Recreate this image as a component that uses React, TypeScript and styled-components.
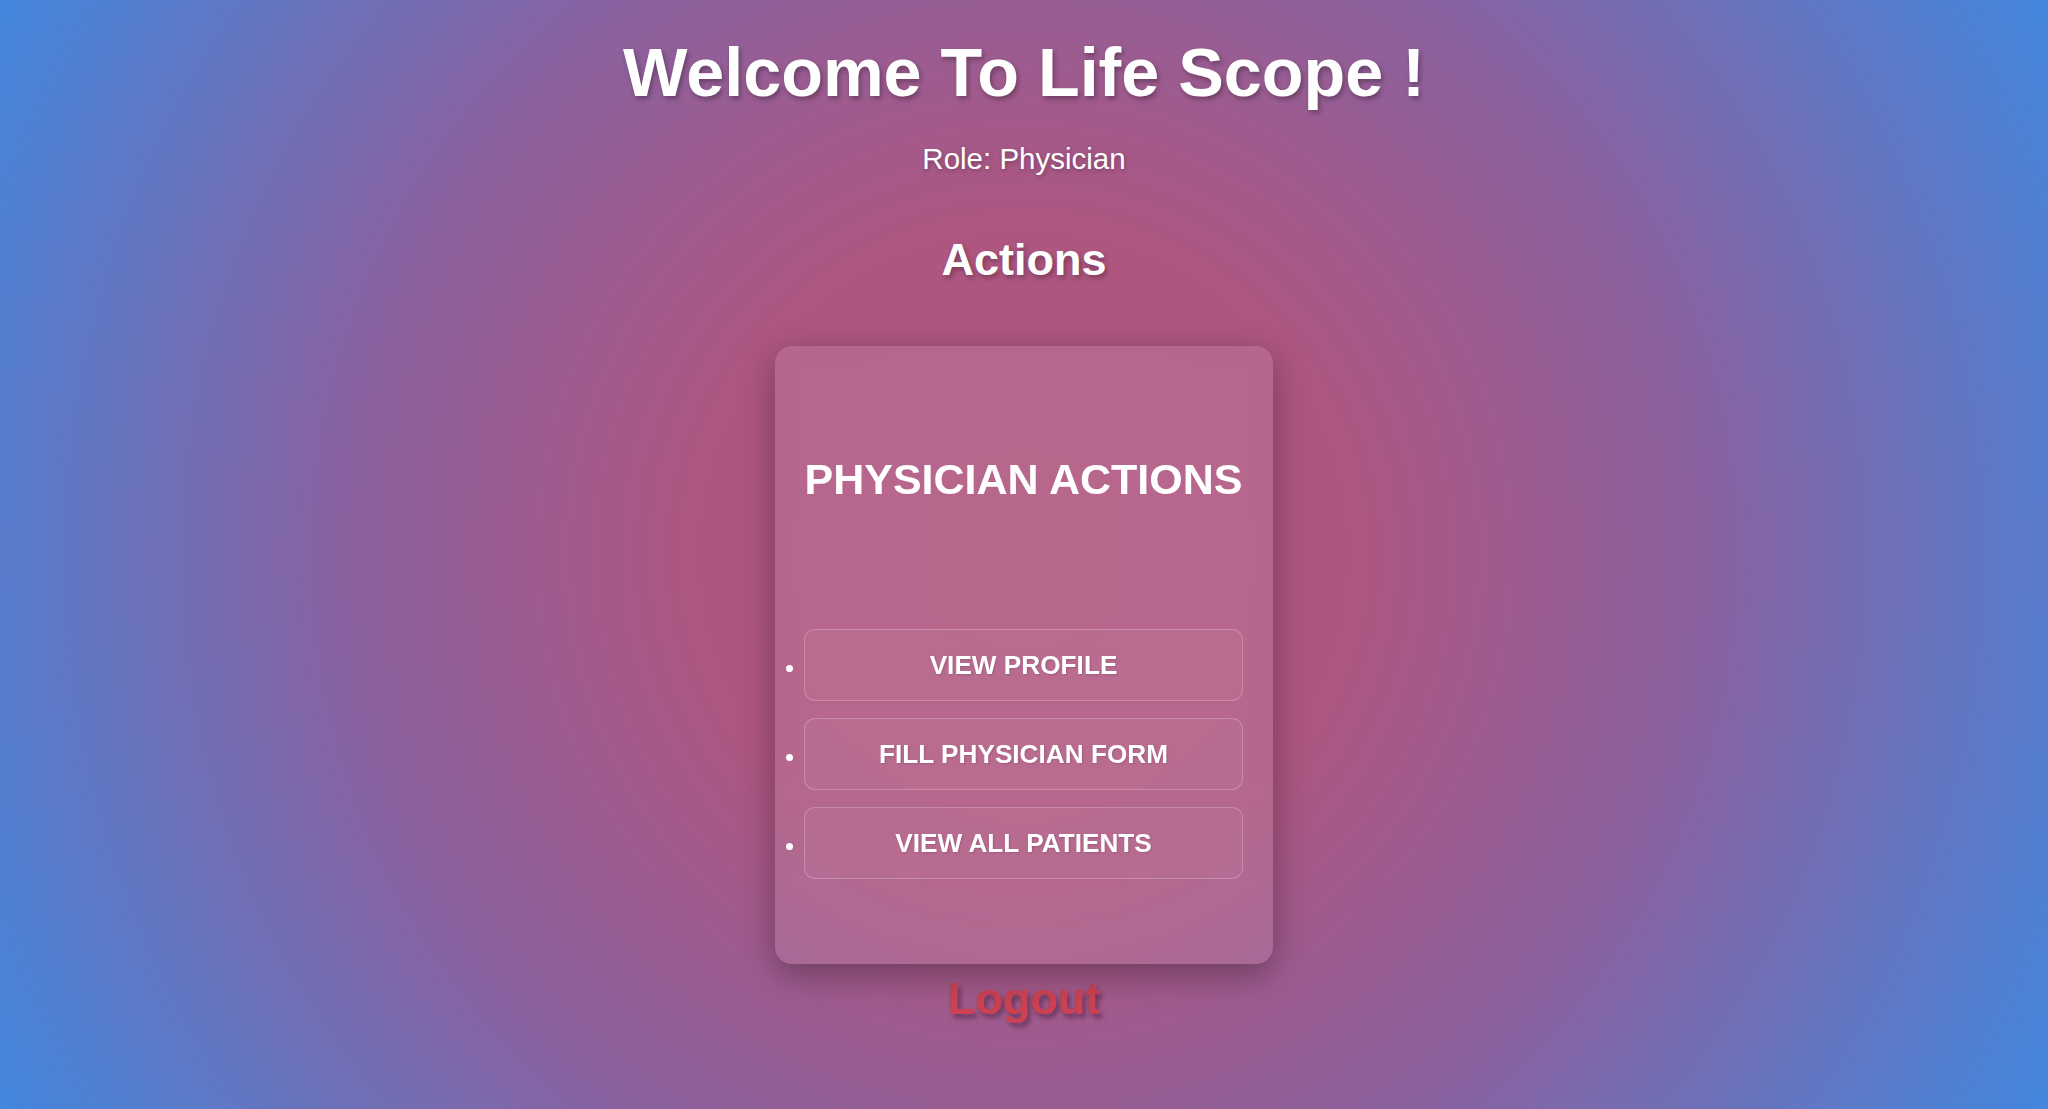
import React from "react";
import styled, { createGlobalStyle } from "styled-components";

const GlobalStyle = createGlobalStyle`
  html, body {
    margin: 0;
    padding: 0;
    height: 100%;
  }
  body {
    font-family: "Liberation Sans", Arial, Helvetica, sans-serif;
    color: #ffffff;
  }
  * { box-sizing: border-box; }
`;

const Page = styled.main`
  min-height: 100vh;
  display: flex;
  flex-direction: column;
  align-items: center;
  padding-top: 34px;
  background: radial-gradient(
    circle at 50% 50%,
    #b0567f 0%,
    #ae5680 28%,
    #8a619f 58%,
    #4287de 100%
  );
`;

const Title = styled.h1`
  margin: 0;
  font-size: 68.3px;
  line-height: 77px;
  font-weight: 700;
  text-shadow: 2px 3px 5px rgba(0, 0, 0, 0.3);
`;

const Role = styled.p`
  margin: 31px 0 0;
  font-size: 29.5px;
  line-height: 34px;
  font-weight: 400;
  text-shadow: 1px 2px 4px rgba(0, 0, 0, 0.25);
`;

const SectionTitle = styled.h2`
  margin: 58px 0 0;
  font-size: 45px;
  line-height: 52px;
  font-weight: 700;
  text-shadow: 2px 3px 5px rgba(0, 0, 0, 0.3);
`;

const Card = styled.section`
  margin-top: 60px;
  width: 498px;
  padding: 30px 30px 85px 29px;
  border-radius: 17px;
  background: rgba(255, 255, 255, 0.1);
  backdrop-filter: blur(10px);
  box-shadow: 0 10px 34px rgba(0, 0, 0, 0.33);
  display: flex;
  flex-direction: column;
`;

const CardTitle = styled.h3`
  margin: 78px 0 0;
  font-size: 43px;
  line-height: 50px;
  font-weight: 700;
  text-align: center;
  text-transform: uppercase;
  white-space: nowrap;
`;

const ActionList = styled.ul`
  list-style: none;
  margin: 125px 0 0;
  padding: 0;
  display: flex;
  flex-direction: column;
  gap: 17px;
`;

const ActionItem = styled.li`
  display: flex;
  align-items: center;
  gap: 11px;
`;

const Dot = styled.span`
  width: 7px;
  height: 7px;
  margin-left: -18px;
  margin-top: 6px;
  border-radius: 50%;
  background: #ffffff;
  flex: none;
`;

const ActionButton = styled.button`
  flex: 1;
  height: 72px;
  border: 1px solid rgba(255, 255, 255, 0.22);
  border-radius: 11px;
  background: rgba(255, 255, 255, 0.03);
  color: #ffffff;
  font-family: "Liberation Sans", Arial, Helvetica, sans-serif;
  font-size: 26.2px;
  font-weight: 700;
  text-transform: uppercase;
  text-shadow: 1px 1px 2px rgba(0, 0, 0, 0.15);
  cursor: pointer;
  padding: 0 12px;
`;

const Logout = styled.button`
  margin-top: 9px;
  border: none;
  background: none;
  padding: 0;
  font-family: "Liberation Sans", Arial, Helvetica, sans-serif;
  font-size: 45px;
  line-height: 52px;
  font-weight: 700;
  color: #cd4252;
  text-shadow: 3px 4px 5px rgba(40, 10, 40, 0.45);
  cursor: pointer;
`;

const actions = ["View Profile", "Fill Physician Form", "View All Patients"];

export default function App() {
  return (
    <>
      <GlobalStyle />
      <Page>
        <Title>Welcome To Life Scope !</Title>
        <Role>Role: Physician</Role>
        <SectionTitle>Actions</SectionTitle>
        <Card>
          <CardTitle>Physician Actions</CardTitle>
          <ActionList>
            {actions.map((a) => (
              <ActionItem key={a}>
                <Dot />
                <ActionButton>{a}</ActionButton>
              </ActionItem>
            ))}
          </ActionList>
        </Card>
        <Logout>Logout</Logout>
      </Page>
    </>
  );
}
